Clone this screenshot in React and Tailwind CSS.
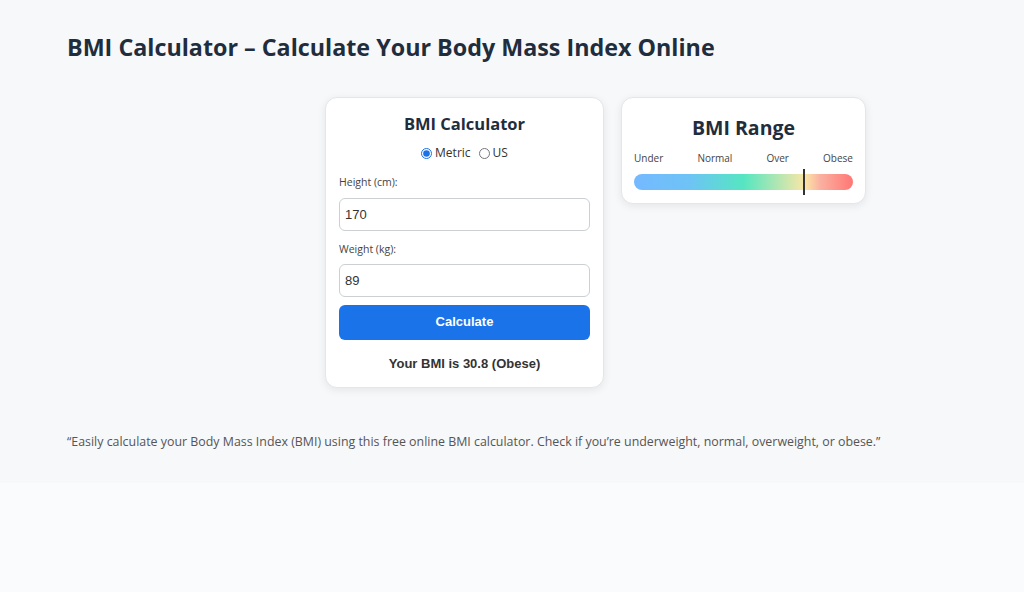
import { useState } from "react";

const segoe = { fontFamily: '"Open Sans", "Noto Sans", sans-serif' };
const arial = { fontFamily: '"Liberation Sans", Arial, sans-serif' };

function Calculator({ unit, setUnit, height, setHeight, weight, setWeight, bmi, label }) {
  return (
    <div className="w-[279px] rounded-xl border border-[#e3e6ea] bg-white px-[13px] pt-[16px] pb-[14px] shadow-[0_2px_8px_rgba(0,0,0,0.08)]">
      <h2 className="text-center text-[16.5px] font-bold leading-[20px] text-[#1f2d3d]">BMI Calculator</h2>
      <div className="mt-[10px] flex items-center justify-center gap-[8px] text-[12px] text-[#333]">
        <label className="flex items-center gap-[3px]">
          <input
            type="radio"
            checked={unit === "metric"}
            onChange={() => setUnit("metric")}
            className="m-0 h-[11px] w-[11px] accent-[#1a73e8]"
          />
          Metric
        </label>
        <label className="flex items-center gap-[3px]">
          <input
            type="radio"
            checked={unit === "us"}
            onChange={() => setUnit("us")}
            className="m-0 h-[11px] w-[11px] accent-[#1a73e8]"
          />
          US
        </label>
      </div>

      <label className="mt-[13px] block text-[10.5px] text-[#444]">Height (cm):</label>
      <input
        value={height}
        onChange={(e) => setHeight(e.target.value)}
        className="mt-[7px] block h-[33px] w-full rounded-md border border-[#ccd0d5] bg-white px-[5px] text-[13px] text-[#333] outline-none"
        style={arial}
      />

      <label className="mt-[11px] block text-[10.5px] text-[#444]">Weight (kg):</label>
      <input
        value={weight}
        onChange={(e) => setWeight(e.target.value)}
        className="mt-[6px] block h-[33px] w-full rounded-md border border-[#ccd0d5] bg-white px-[5px] text-[13px] text-[#333] outline-none"
        style={arial}
      />

      <button
        className="mt-[8px] block h-[35px] w-full rounded-md bg-[#1a73e8] text-[13px] font-bold text-white"
        style={arial}
      >
        Calculate
      </button>

      <p className="mt-[14px] text-center text-[13px] font-bold text-[#333]" style={arial}>
        Your BMI is {bmi} ({label})
      </p>
    </div>
  );
}

function RangeCard({ bmi }) {
  // marker position along the bar
  const pos = Math.min(100, Math.max(0, ((bmi - 15) / (35.5 - 15)) * 100));
  return (
    <div className="w-[245px] rounded-xl border border-[#e3e6ea] bg-white px-[12px] pt-[17px] pb-[13px] shadow-[0_2px_8px_rgba(0,0,0,0.08)]">
      <h2 className="text-center text-[19.5px] font-bold leading-[26px] text-[#1f2d3d]">BMI Range</h2>
      <div className="mt-[10px] flex justify-between text-[10px] text-[#444]">
        <span>Under</span>
        <span>Normal</span>
        <span>Over</span>
        <span>Obese</span>
      </div>
      <div className="relative mt-[8px] h-[16px] rounded-full bg-[linear-gradient(to_right,#74b9ff_0%,#6ec3f6_25%,#55e6c1_50%,#fbe6a6_78%,#fab1a0_85%,#ff7675_100%)]">
        <div className="absolute top-[-5px] h-[26px] w-[2px] bg-[#333]" style={{ left: `${pos}%` }} />
      </div>
    </div>
  );
}

export default function App() {
  const [unit, setUnit] = useState("metric");
  const [height, setHeight] = useState("170");
  const [weight, setWeight] = useState("89");

  const bmi = 30.8;
  const label = "Obese";

  return (
    <div className="min-h-[592px] bg-[#fafbfc]" style={segoe}>
      <div className="bg-[#f7f8fa] px-[67px] pt-[32px] pb-[31px]">
        <h1 className="text-[23.3px] font-bold leading-[30px] text-[#1f2d3d]">
          BMI Calculator – Calculate Your Body Mass Index Online
        </h1>

        <div className="mt-[35px] flex items-start gap-[17px] pl-[258px]">
          <Calculator
            unit={unit}
            setUnit={setUnit}
            height={height}
            setHeight={setHeight}
            weight={weight}
            setWeight={setWeight}
            bmi={bmi}
            label={label}
          />
          <RangeCard bmi={bmi} />
        </div>

        <p className="mt-[45px] text-[12.4px] text-[#555]">
          “Easily calculate your Body Mass Index (BMI) using this free online BMI calculator. Check if you’re underweight, normal, overweight, or obese.”
        </p>
      </div>
    </div>
  );
}
